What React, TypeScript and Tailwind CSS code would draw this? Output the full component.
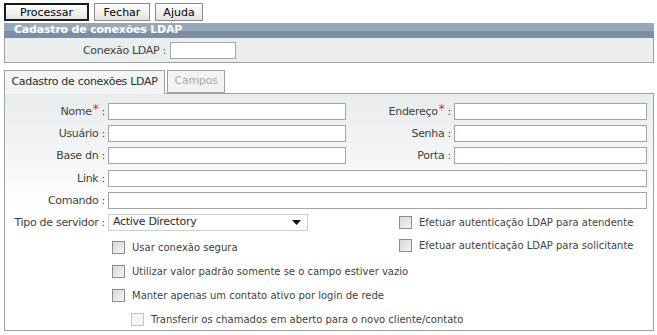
import React from "react";

const font = { fontFamily: '"DejaVu Sans", Verdana, sans-serif' };

const Field = ({ w }: { w: string }) => (
  <div className={`h-[17px] border border-[#a5a5a5] bg-white ${w}`} />
);

const Label = ({ text, req, w }: { text: string; req?: boolean; w: string }) => (
  <div className={`${w} shrink-0 text-right text-[11px] tracking-[-0.3px] leading-[17px] text-[#3f3f3f] whitespace-nowrap pr-[3px]`}>
    {text}
    {req && <span className="text-[#e8232c] text-[12px] ml-[1px] relative top-[-2px]">*</span>}
    {" "}:
  </div>
);

const Check = ({ label, faded }: { label: string; faded?: boolean }) => (
  <div className="flex items-center gap-[7px] h-[13px]">
    <div
      className={`w-[13px] h-[13px] shrink-0 border ${
        faded ? "border-[#c4c4c4] bg-[#f7f7f7]" : "border-[#8c8c8c] bg-gradient-to-br from-[#d8d8d8] to-[#f4f4f4]"
      }`}
    />
    <span className="text-[10px] text-[#3f3f3f] whitespace-nowrap">{label}</span>
  </div>
);

export default function App() {
  return (
    <div style={font} className="w-[657px] h-[335px] bg-white text-[11px] overflow-hidden">
      {/* toolbar */}
      <div className="flex gap-[5px] pl-[4px] pt-[3px]">
        <button className="h-[18px] w-[85px] border-2 border-[#1a1a1a] bg-gradient-to-b from-white to-[#e4e4e4] text-[11px] text-black leading-none">
          Processar
        </button>
        <button className="h-[18px] w-[56px] border border-[#8a8a8a] bg-gradient-to-b from-white to-[#e4e4e4] text-[11px] text-black leading-none">
          Fechar
        </button>
        <button className="h-[18px] w-[48px] border border-[#8a8a8a] bg-gradient-to-b from-white to-[#e4e4e4] text-[11px] text-black leading-none">
          Ajuda
        </button>
      </div>

      {/* header section */}
      <div className="mx-[4px] mt-[2px] w-[650px]">
        <div className="h-[15px] bg-[linear-gradient(#97a9b9_0,#97a9b9_55%,#7a8fa3_55%,#7a8fa3_100%)] pl-[10px] text-[11px] tracking-[-0.2px] font-bold text-white leading-[14px]">
          Cadastro de conexões LDAP
        </div>
        <div className="h-[25px] border border-t-0 border-[#a0a0a0] bg-[#eaeeef] flex items-center">
          <Label text="Conexão LDAP" w="w-[164px]" />
          <div className="ml-[1px] w-[66px]">
            <Field w="w-[66px] h-[16px]" />
          </div>
        </div>
      </div>

      {/* tabs */}
      <div className="mx-[4px] mt-[6px] w-[650px]">
        <div className="flex gap-[2px] items-end">
          <div className="h-[24px] w-[161px] border border-b-0 border-[#a0a0a0] bg-[#f3f4f4] text-[11px] tracking-[-0.3px] text-[#2e2e2e] flex items-center justify-center relative top-[1px]">
            Cadastro de conexões LDAP
          </div>
          <div className="h-[23px] w-[58px] border border-[#a0a0a0] bg-[#f3f3f3] text-[11px] tracking-[-0.3px] text-[#a9a9a9] flex items-center justify-center">
            Campos
          </div>
        </div>
        <div className="h-[238px] border border-[#a0a0a0] bg-gradient-to-b from-[#e9eced] via-white to-white pt-[9px] pr-[6px]">
          <div className="flex flex-col gap-[5px]">
            {[
              ["Nome", true, "Endereço", true],
              ["Usuário", false, "Senha", false],
              ["Base dn", false, "Porta", false],
            ].map(([a, ar, b, br]) => (
              <div key={a as string} className="flex items-center">
                <Label text={a as string} req={ar as boolean} w="w-[103px]" />
                <Field w="w-[238px]" />
                <Label text={b as string} req={br as boolean} w="w-[108px]" />
                <Field w="w-[193px]" />
              </div>
            ))}
            <div className="flex items-center mt-[1px]">
              <Label text="Link" w="w-[103px]" />
              <Field w="w-[541px]" />
            </div>
            <div className="flex items-center">
              <Label text="Comando" w="w-[103px]" />
              <Field w="w-[541px]" />
            </div>
          </div>

          <div className="flex mt-[5px]">
            <div className="flex flex-col w-[394px] shrink-0">
              <div className="flex items-center">
                <Label text="Tipo de servidor" w="w-[103px]" />
                <div className="h-[17px] w-[200px] border border-[#cfcfcf] bg-white flex items-center justify-between pl-[4px] pr-[6px] text-[11px] tracking-[-0.3px] text-[#2e2e2e]">
                  <span>Active Directory</span>
                  <svg width="9" height="5" viewBox="0 0 9 5">
                    <path d="M0 0h9L4.5 5z" fill="#111" />
                  </svg>
                </div>
              </div>
              <div className="flex flex-col gap-[11px] pl-[107px] mt-[10px]">
                <Check label="Usar conexão segura" />
                <Check label="Utilizar valor padrão somente se o campo estiver vazio" />
                <Check label="Manter apenas um contato ativo por login de rede" />
                <div className="pl-[19px]">
                  <Check label="Transferir os chamados em aberto para o novo cliente/contato" faded />
                </div>
              </div>
            </div>
            <div className="flex flex-col gap-[10px] pt-[2px]">
              <Check label="Efetuar autenticação LDAP para atendente" />
              <Check label="Efetuar autenticação LDAP para solicitante" />
            </div>
          </div>
        </div>
      </div>
    </div>
  );
}
